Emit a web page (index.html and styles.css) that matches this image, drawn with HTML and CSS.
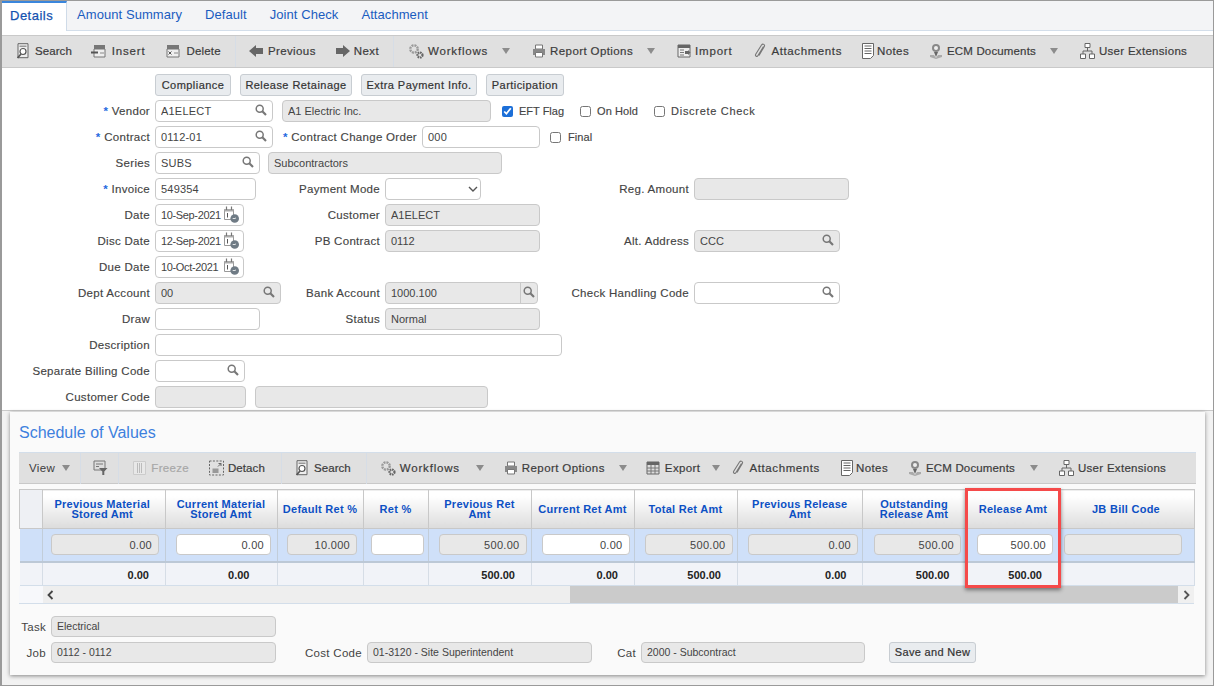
FILE: index.html
```html
<!DOCTYPE html>
<html lang="en">
<head>
<meta charset="utf-8">
<title>Details</title>
<link rel="stylesheet" href="styles.css">
</head>
<body>
<svg class="defs" width="0" height="0" aria-hidden="true">
  <defs>
    <symbol id="i-search" viewBox="0 0 14 16"><path d="M2 .7h10v14H2z" fill="#eee" stroke="#666"/><path d="M3.500 2.500h7v1.500h-7z" fill="#999"/><circle cx="7" cy="8.500" r="3" fill="#fff" stroke="#555" stroke-width="1.200"/><path d="M5 11 1.500 15" stroke="#555" stroke-width="1.600"/></symbol>
    <symbol id="i-insert" viewBox="0 0 16 16"><path d="M3 2h11v4H3z" fill="#777"/><path d="M3 6h11v8H3z" fill="#eee" stroke="#777"/><path d="M0 9.500h7" stroke="#555" stroke-width="2"/><path d="M9 10h4" stroke="#888"/></symbol>
    <symbol id="i-delete" viewBox="0 0 16 16"><path d="M2 2h12v4H2z" fill="#777"/><path d="M2 6h12v8H2z" fill="#eee" stroke="#777"/><path d="M3.500 8.500l3 3m0-3-3 3" stroke="#555"/><path d="M9 10h4" stroke="#888"/></symbol>
    <symbol id="i-left" viewBox="0 0 14 14"><path d="M0 7 7 1v3h7v6H7v3z" fill="#666"/></symbol>
    <symbol id="i-right" viewBox="0 0 14 14"><path d="M14 7 7 1v3H0v6h7v3z" fill="#666"/></symbol>
    <symbol id="i-gears" viewBox="0 0 16 16"><circle cx="6" cy="6" r="3.700" fill="none" stroke="#999" stroke-width="2.400" stroke-dasharray="2 .9"/><circle cx="12" cy="12" r="2.500" fill="none" stroke="#666" stroke-width="2.200" stroke-dasharray="1.600 .7"/></symbol>
    <symbol id="i-print" viewBox="0 0 14 14"><path d="M3.500 1h7v4h-7z" fill="#fff" stroke="#777"/><path d="M1 5h12v6H1z" fill="#888"/><path d="M3.500 8.500h7v4.500h-7z" fill="#fff" stroke="#777"/></symbol>
    <symbol id="i-import" viewBox="0 0 14 14"><path d="M1 1h12v12H1z" fill="#eee" stroke="#666"/><path d="M1 1h12v3H1z" fill="#666"/><path d="M3 6h4M3 8.500h4M3 11h4" stroke="#777"/><path d="M8 7h3v-1l2.500 2.500L11 11v-1H8z" fill="#666"/></symbol>
    <symbol id="i-clip" viewBox="0 0 12 16"><path d="M9.500 3.500 4 12.500c-1 1.700-3.200.6-2.300-1.200L7.500 2c1.300-1.800 3.800-.4 2.800 1.500L5 12.500" fill="none" stroke="#777" stroke-width="1.100"/></symbol>
    <symbol id="i-notes" viewBox="0 0 12 16"><path d="M.5.500h11v12l-3 3h-8z" fill="#fff" stroke="#666"/><path d="M2.500 3h7M2.500 5.500h7M2.500 8h7M2.500 10.500h7" stroke="#666"/></symbol>
    <symbol id="i-ecm" viewBox="0 0 14 16"><circle cx="7" cy="5" r="4" fill="#888"/><circle cx="7" cy="5" r="2" fill="#eee"/><path d="M5 9h4l-2 5z" fill="#666"/><path d="M1 12h4l2 3 2-3h4v2l-6 2-6-2z" fill="#aaa"/></symbol>
    <symbol id="i-tree" viewBox="0 0 15 16"><path d="M5 .5h5v4H5zM.5 11h5v4.500h-5zM9.500 11h5v4.500h-5z" fill="#fff" stroke="#666"/><path d="M7.500 4.500V8M3 11V8h9v3" fill="none" stroke="#666"/></symbol>
    <symbol id="i-filter" viewBox="0 0 15 16"><path d="M1 1h11v9H1z" fill="#ddd" stroke="#777"/><path d="M3 4h7M3 6.500h3" stroke="#777"/><path d="M6 8h8.500l-3.200 3.500V15h-2v-3.500z" fill="#666"/></symbol>
    <symbol id="i-freeze" viewBox="0 0 13 14"><path d="M.5.500h12v13H.5z" fill="#e8e8e8" stroke="#ccc"/><path d="M4.500 2v10M6.500 2v10M8.500 2v10" stroke="#bbb"/></symbol>
    <symbol id="i-detach" viewBox="0 0 15 15"><path d="M.5.500h14v14H.5z" fill="none" stroke="#666" stroke-dasharray="2 1.400"/><path d="M3.500 8h6v4.500h-6z" fill="#999"/><path d="M9 6l3-3m-2.500 0H12v2.500" fill="none" stroke="#666"/></symbol>
    <symbol id="i-export" viewBox="0 0 14 14"><path d="M1 1h12v12H1z" fill="#ddd" stroke="#666"/><path d="M1 1h12v3H1z" fill="#666"/><path d="M5 4v9M9 4v9M1 7h12M1 10h12" stroke="#777"/></symbol>
    <symbol id="i-mag" viewBox="0 0 12 12"><circle cx="4.700" cy="4.700" r="3.500" fill="none" stroke="#777" stroke-width="1.500"/><path d="M7.300 7.300l3.700 3.700" stroke="#777" stroke-width="2.200"/></symbol>
    <symbol id="i-cal" viewBox="0 0 15 17"><path d="M.5 3.500h9v10h-9z" fill="#fff" stroke="#999"/><path d="M.5 3h9v2.500h-9z" fill="#aaa"/><path d="M2.500.500v3.500M7.500.500v3.500" stroke="#777" stroke-width="1.200"/><path d="M3.500 7v4.500" stroke="#555"/><circle cx="10.700" cy="12.500" r="4.300" fill="#6f7b85"/><path d="M8.700 12.500h2.300l1-.7" fill="none" stroke="#fff" stroke-width=".8"/></symbol>
    <symbol id="i-chev" viewBox="0 0 10 6"><path d="M1 1l4 4 4-4" fill="none" stroke="#555" stroke-width="1.400"/></symbol>
    <symbol id="i-sl" viewBox="0 0 7 10"><path d="M5.500 1 1.500 5l4 4" fill="none" stroke="#444" stroke-width="1.800"/></symbol>
    <symbol id="i-sr" viewBox="0 0 7 10"><path d="M1.500 1l4 4-4 4" fill="none" stroke="#555" stroke-width="1.800"/></symbol>
  </defs>
</svg>

<main class="window">
  <nav class="tabs">
    <a class="tab active">Details</a>
    <a class="tab">Amount Summary</a>
    <a class="tab">Default</a>
    <a class="tab">Joint Check</a>
    <a class="tab">Attachment</a>
  </nav>

  <div class="toolbar top">
    <span class="tool g5 narrow"><svg class="ic w14"><use href="#i-search"/></svg>Search</span>
    <span class="tool g5 t-insert"><svg class="ic w16"><use href="#i-insert"/></svg>Insert</span>
    <span class="tool g5 t-delete"><svg class="ic w16"><use href="#i-delete"/></svg>Delete</span>
    <span class="vsep"></span>
    <span class="tool g5 t-prev"><svg class="ic w14"><use href="#i-left"/></svg>Previous</span>
    <span class="tool t-next"><svg class="ic w14"><use href="#i-right"/></svg>Next</span>
    <span class="vsep"></span>
    <span class="tool t-wf"><svg class="ic w16"><use href="#i-gears"/></svg>Workflows<i class="caret"></i></span>
    <span class="tool t-rep"><svg class="ic w14"><use href="#i-print"/></svg>Report Options<i class="caret"></i></span>
    <span class="tool t-imp"><svg class="ic w14"><use href="#i-import"/></svg>Import</span>
    <span class="tool g5 t-att"><svg class="ic w12"><use href="#i-clip"/></svg>Attachments</span>
    <span class="tool t-not"><svg class="ic w12"><use href="#i-notes"/></svg>Notes</span>
    <span class="tool t-ecm"><svg class="ic w14"><use href="#i-ecm"/></svg>ECM Documents<i class="caret"></i></span>
    <span class="tool t-usr"><svg class="ic w15"><use href="#i-tree"/></svg>User Extensions</span>
  </div>

  <form class="form">
    <div class="btnrow">
      <button type="button" class="btn b1">Compliance</button>
      <button type="button" class="btn b2">Release Retainage</button>
      <button type="button" class="btn b3">Extra Payment Info.</button>
      <button type="button" class="btn b4">Participation</button>
    </div>

    <div class="row">
      <label class="lbl"><b>*</b> Vendor</label>
      <div class="span">
        <span class="fld w118"><input value="A1ELECT"><svg class="mag"><use href="#i-mag"/></svg></span>
        <input class="ro w209 ml9" value="A1 Electric Inc." readonly>
        <label class="chk ml11 ls0"><input type="checkbox" checked>EFT Flag</label>
        <label class="chk ml16 ls1"><input type="checkbox">On Hold</label>
        <label class="chk ml16 ls7"><input type="checkbox">Discrete Check</label>
      </div>
    </div>

    <div class="row">
      <label class="lbl"><b>*</b> Contract</label>
      <div class="span">
        <span class="fld w118"><input value="0112-01"><svg class="mag"><use href="#i-mag"/></svg></span>
        <label class="lbl2 w149"><b>*</b> Contract Change Order</label>
        <input class="w118" value="000">
        <label class="chk ml10 gap7 ls1"><input type="checkbox">Final</label>
      </div>
    </div>

    <div class="row">
      <label class="lbl">Series</label>
      <div class="span">
        <span class="fld w105"><input value="SUBS"><svg class="mag"><use href="#i-mag"/></svg></span>
        <input class="ro w234 ml8" value="Subcontractors" readonly>
      </div>
    </div>

    <div class="row">
      <label class="lbl"><b>*</b> Invoice</label>
      <div class="c2"><input class="w101" value="549354"><label class="lbl2">Payment Mode</label></div>
      <div class="c3"><span class="fld w96"><select class="sel"><option></option></select><svg class="chev"><use href="#i-chev"/></svg></span><label class="lbl2">Reg. Amount</label></div>
      <input class="ro w155" readonly>
    </div>

    <div class="row">
      <label class="lbl">Date</label>
      <div class="c2"><span class="fld w89"><input class="date" value="10-Sep-2021"><svg class="cal"><use href="#i-cal"/></svg></span><label class="lbl2">Customer</label></div>
      <div class="c3"><input class="ro w155" value="A1ELECT" readonly></div>
    </div>

    <div class="row">
      <label class="lbl">Disc Date</label>
      <div class="c2"><span class="fld w89"><input class="date" value="12-Sep-2021"><svg class="cal"><use href="#i-cal"/></svg></span><label class="lbl2">PB Contract</label></div>
      <div class="c3"><input class="ro w155" value="0112" readonly><label class="lbl2">Alt. Address</label></div>
      <span class="fld w146"><input class="ro" value="CCC" readonly><svg class="mag"><use href="#i-mag"/></svg></span>
    </div>

    <div class="row">
      <label class="lbl">Due Date</label>
      <div class="c2"><span class="fld w89"><input class="date" value="10-Oct-2021"><svg class="cal"><use href="#i-cal"/></svg></span></div>
    </div>

    <div class="row">
      <label class="lbl">Dept Account</label>
      <div class="c2"><span class="fld w126"><input class="ro" value="00" readonly><svg class="mag"><use href="#i-mag"/></svg></span><label class="lbl2">Bank Account</label></div>
      <div class="c3"><span class="fld w153"><input class="ro" value="1000.100" readonly><span class="magbox"><svg class="mag"><use href="#i-mag"/></svg></span></span><label class="lbl2">Check Handling Code</label></div>
      <span class="fld w146"><input><svg class="mag"><use href="#i-mag"/></svg></span>
    </div>

    <div class="row">
      <label class="lbl">Draw</label>
      <div class="c2"><input class="w105"><label class="lbl2">Status</label></div>
      <div class="c3"><input class="ro w155" value="Normal" readonly></div>
    </div>

    <div class="row">
      <label class="lbl">Description</label>
      <div class="span"><input class="w407"></div>
    </div>

    <div class="row">
      <label class="lbl">Separate Billing Code</label>
      <div class="span"><span class="fld w90"><input><svg class="mag"><use href="#i-mag"/></svg></span></div>
    </div>

    <div class="row">
      <label class="lbl">Customer Code</label>
      <div class="span"><input class="ro w91" readonly><input class="ro w233 ml9" readonly></div>
    </div>
  </form>

  <div class="lower">
  <section class="panel">
    <h2 class="title">Schedule of Values</h2>
    <div class="toolbar sub">
      <span class="tool view">View<i class="caret c-view"></i></span>
      <span class="vsep sv"></span>
      <svg class="ic w15 s-filter"><use href="#i-filter"/></svg>
      <span class="vsep sf"></span>
      <span class="tool g5 dis s-freeze"><svg class="ic w13"><use href="#i-freeze"/></svg>Freeze</span>
      <span class="tool s-detach"><svg class="ic w15"><use href="#i-detach"/></svg>Detach</span>
      <span class="vsep sd"></span>
      <span class="tool g5 narrow s-search"><svg class="ic w14"><use href="#i-search"/></svg>Search</span>
      <span class="vsep ss"></span>
      <span class="tool s-wf"><svg class="ic w16"><use href="#i-gears"/></svg>Workflows<i class="caret c-wf"></i></span>
      <span class="tool s-rep"><svg class="ic w14"><use href="#i-print"/></svg>Report Options<i class="caret"></i></span>
      <span class="tool g5 s-exp"><svg class="ic w14"><use href="#i-export"/></svg>Export<i class="caret c-exp"></i></span>
      <span class="tool g5 s-att"><svg class="ic w12"><use href="#i-clip"/></svg>Attachments</span>
      <span class="tool s-not"><svg class="ic w12"><use href="#i-notes"/></svg>Notes</span>
      <span class="tool s-ecm"><svg class="ic w14"><use href="#i-ecm"/></svg>ECM Documents<i class="caret c-ecm"></i></span>
      <span class="tool s-usr"><svg class="ic w15"><use href="#i-tree"/></svg>User Extensions</span>
    </div>

    <div class="gridwrap">
      <table class="grid">
        <colgroup>
          <col class="k0"><col class="k1"><col class="k2"><col class="k3"><col class="k4"><col class="k5"><col class="k6"><col class="k7"><col class="k8"><col class="k9"><col class="k10"><col class="k11">
        </colgroup>
        <thead>
          <tr>
            <th></th>
            <th>Previous Material<br>Stored Amt</th>
            <th>Current Material<br>Stored Amt</th>
            <th>Default Ret %</th>
            <th>Ret %</th>
            <th>Previous Ret<br>Amt</th>
            <th>Current Ret Amt</th>
            <th>Total Ret Amt</th>
            <th>Previous Release<br>Amt</th>
            <th>Outstanding<br>Release Amt</th>
            <th>Release Amt</th>
            <th class="jb">JB Bill Code</th>
          </tr>
        </thead>
        <tbody>
          <tr class="data">
            <td></td>
            <td><input class="ro num" value="0.00" readonly></td>
            <td><input class="num" value="0.00"></td>
            <td><input class="ro num" value="10.000" readonly></td>
            <td><input class="num"></td>
            <td><input class="ro num" value="500.00" readonly></td>
            <td><input class="num" value="0.00"></td>
            <td><input class="ro num" value="500.00" readonly></td>
            <td><input class="ro num" value="0.00" readonly></td>
            <td><input class="ro num" value="500.00" readonly></td>
            <td><input class="num" value="500.00"></td>
            <td><input class="ro num" readonly></td>
          </tr>
          <tr class="totals">
            <td></td><td>0.00</td><td>0.00</td><td></td><td></td><td>500.00</td><td>0.00</td><td>500.00</td><td>0.00</td><td>500.00</td><td>500.00</td><td></td>
          </tr>
        </tbody>
      </table>
      <div class="scrollbar">
        <span class="sc-corner"></span>
        <span class="sc-btn"><svg class="sc-ic"><use href="#i-sl"/></svg></span>
        <span class="sc-track"><span class="sc-thumb"></span></span>
        <span class="sc-btn right"><svg class="sc-ic"><use href="#i-sr"/></svg></span>
      </div>
      <div class="redbox"></div>
    </div>

    <div class="foot">
      <div class="frow"><label class="flbl">Task</label><input class="ro w225" value="Electrical" readonly></div>
      <div class="frow">
        <label class="flbl">Job</label><input class="ro w225" value="0112 - 0112" readonly>
        <label class="flbl l-cost">Cost Code</label><input class="ro w225" value="01-3120 - Site Superintendent" readonly>
        <label class="flbl l-cat">Cat</label><input class="ro w224" value="2000 - Subcontract" readonly>
        <button type="button" class="btn save">Save and New</button>
      </div>
    </div>
  </section>
  </div>
</main>
</body>
</html>
```

FILE: styles.css
```css
* { box-sizing: border-box; }
html, body { margin: 0; padding: 0; }
body { width: 1214px; height: 686px; overflow: hidden; background: #fff; font-family: "Liberation Sans", Arial, sans-serif; font-size: 11px; color: #444; }
.defs { position: absolute; }
.window { width: 1214px; height: 686px; border: 1px solid #9a9a9a; border-left-width: 2px; display: flex; flex-direction: column; background: #fff; }

.tabs { display: flex; height: 30px; flex: none; background: #f3f4f6; border-bottom: 1px solid #d3deea; }
.tab { padding: 0 10px; margin-left: 3px; line-height: 28px; font-size: 13px; letter-spacing: .07px; color: #1a5cc0; }
.tab.active { width: 65px; height: 30px; margin: 0; padding: 0 0 0 8px; line-height: 26px; letter-spacing: .5px; background: #fff; border-top: 2px solid #3a86dc; border-right: 1px solid #cfdbe8; color: #1452b0; -webkit-text-stroke: .25px #1452b0; }
.tab.active + .tab { margin-left: 0; }

.toolbar { display: flex; align-items: center; background: #e0e0e0; flex: none; }
.toolbar.top { margin-top: 4px; height: 33px; border-top: 1px solid #c9c9c9; border-bottom: 1px solid #c9c9c9; padding: 0 0 1px 14px; }
.tool { display: inline-flex; align-items: center; gap: 4px; font-size: 11.500px; letter-spacing: .4px; color: #3c3c3c; white-space: nowrap; -webkit-text-stroke: .2px #3c3c3c; }
.g5 { gap: 5px; }
.narrow { letter-spacing: .07px; }
.tool.dis { color: #a8a8a8; -webkit-text-stroke: .2px #a8a8a8; }
.ic { flex: none; height: 16px; }
.w12 { width: 12px; } .w13 { width: 13px; } .w14 { width: 14px; } .w15 { width: 15px; } .w16 { width: 16px; }
.vsep { width: 1px; height: 31px; background: #d6dde6; flex: none; }
.caret { width: 0; height: 0; margin-left: 10px; border-left: 4px solid transparent; border-right: 4px solid transparent; border-top: 6px solid #8c8c8c; }

.t-insert { margin-left: 19px; letter-spacing: .8px; }
.t-delete { margin-left: 20px; letter-spacing: .2px; }
.top .vsep { margin-left: 14px; }
.t-prev { margin-left: 13px; }
.t-next { margin-left: 20px; }
.t-wf { margin-left: 14px; letter-spacing: .8px; }
.t-rep { margin-left: 22px; }
.t-imp { margin-left: 22px; letter-spacing: .8px; }
.t-att { margin-left: 22px; letter-spacing: .6px; }
.t-not { margin-left: 20px; gap: 3px; }
.t-ecm { margin-left: 20px; letter-spacing: .15px; }
.t-usr { margin-left: 22px; letter-spacing: .3px; }

.form { padding: 6px 0 0; height: 342px; flex: none; }
.btnrow { display: flex; gap: 9px; padding-left: 153px; height: 22px; margin-bottom: 4px; }
.btn { height: 22px; padding: 0; border: 1px solid #c8cdd2; border-radius: 3px; background: #e9ecef; font: 400 11px "Liberation Sans", Arial, sans-serif; letter-spacing: .45px; color: #333; -webkit-text-stroke: .2px #333; }
.b1 { width: 76px; } .b2 { width: 112px; } .b3 { width: 116px; } .b4 { width: 78px; }
.row { display: grid; grid-template-columns: 153px 230px 309px 1fr; height: 22px; margin-bottom: 4px; align-items: center; }
.lbl, .lbl2 { padding-right: 5px; text-align: right; white-space: nowrap; font-size: 11.500px; letter-spacing: .3px; -webkit-text-stroke: .15px #444; }
.lbl b, .lbl2 b { color: #1f6ae0; font-weight: 700; -webkit-text-stroke: 0; }
.c2, .c3 { display: flex; justify-content: space-between; align-items: center; height: 22px; }
.span { grid-column: 2 / 5; display: flex; align-items: center; height: 22px; }

input { height: 22px; width: 100%; padding: 0 5px; border: 1px solid #c9c9c9; border-radius: 4px; background: #fff; font: 11px "Liberation Sans", Arial, sans-serif; letter-spacing: .2px; color: #444; outline: none; margin: 0; }
input.ro { background: #e8e8e8; letter-spacing: 0; }
.fld { position: relative; display: block; height: 22px; flex: none; }
.mag { position: absolute; right: 6px; top: 4px; width: 12px; height: 12px; }
.cal { position: absolute; right: 5px; top: 2px; width: 15px; height: 17px; }
input.date { padding-right: 0; letter-spacing: -.35px; }
.magbox { position: absolute; right: 0; top: 0; width: 18px; height: 22px; border-left: 1px solid #c9c9c9; }
.magbox .mag { right: 3px; }
.sel { display: block; width: 96px; height: 22px; appearance: none; -webkit-appearance: none; border: 1px solid #c9c9c9; border-radius: 4px; background: #fff; font: 11px "Liberation Sans", Arial, sans-serif; }
.chev { position: absolute; right: 3px; top: 8px; width: 10px; height: 6px; }
.w89 { width: 89px; } .w90 { width: 90px; } .w91 { width: 91px; flex: none; } .w96 { width: 96px; } .w101 { width: 101px; } .w105 { width: 105px; flex: none; } .w118 { width: 118px; flex: none; }
.w126 { width: 126px; } .w146 { width: 146px; } .w153 { width: 153px; } .w155 { width: 155px; flex: none; } .w209 { width: 209px; flex: none; } .w224 { width: 224px; flex: none; } .w225 { width: 225px; flex: none; } .w233 { width: 233px; flex: none; } .w234 { width: 234px; flex: none; } .w407 { width: 407px; }
.lbl2.w149 { width: 149px; flex: none; }
.ml8 { margin-left: 8px; } .ml9 { margin-left: 9px; } .ml10 { margin-left: 10px; } .ml11 { margin-left: 11px; } .ml16 { margin-left: 16px; }
.chk { display: inline-flex; align-items: center; gap: 6px; white-space: nowrap; letter-spacing: .36px; -webkit-text-stroke: .15px #444; }
.gap7 { gap: 7px; }
.ls0 { letter-spacing: 0; } .ls1 { letter-spacing: .1px; } .ls7 { letter-spacing: .7px; }
.chk input { width: 11px; height: 11px; margin: 1px 0 0; flex: none; accent-color: #1c6fd8; }

.lower { flex: 1; background: #f2f2f2; border-top: 1px solid #c9c9c9; padding: 1px 8px 0; }
.panel { height: 263px; background: #fafafa; padding: 0 9px; box-shadow: 0 1px 4px rgba(0,0,0,.45); }
.title { margin: 0; height: 40px; padding-top: 11px; font-size: 16px; line-height: 20px; font-weight: 400; color: #3d80de; }
.toolbar.sub { height: 32px; border-top: 1px solid #d3deea; border-bottom: 1px solid #c9c9c9; padding-left: 10px; }
.view { -webkit-text-stroke: 0; gap: 0; }
.c-view { margin-left: 7px; }
.sv { margin-left: 10px; }
.s-filter { margin-left: 12px; }
.sf { margin-left: 10px; }
.s-freeze { margin-left: 14px; letter-spacing: .3px; }
.s-detach { margin-left: 20px; letter-spacing: .1px; }
.sd { margin-left: 16px; }
.s-search { margin-left: 13px; }
.ss { margin-left: 15px; }
.s-wf { margin-left: 13px; letter-spacing: .8px; }
.c-wf { margin-left: 12px; }
.s-rep { margin-left: 20px; }
.s-exp { margin-left: 19px; }
.c-exp { margin-left: 7px; }
.s-att { margin-left: 12px; letter-spacing: .6px; }
.s-not { margin-left: 21px; gap: 3px; }
.s-ecm { margin-left: 20px; letter-spacing: .15px; }
.c-ecm { margin-left: 11px; }
.s-usr { margin-left: 21px; letter-spacing: .3px; }

.gridwrap { position: relative; margin-top: 5px; width: 1175px; }
.grid { table-layout: fixed; width: 1175px; border-collapse: collapse; }
.k0 { width: 23px; } .k1 { width: 122.500px; } .k2 { width: 112px; } .k3 { width: 86px; } .k4 { width: 65px; } .k5 { width: 103px; } .k6 { width: 103px; } .k7 { width: 103px; } .k8 { width: 125.500px; } .k9 { width: 103px; } .k10 { width: 95px; } .k11 { width: 134px; }
.grid th { height: 39px; padding: 0; border: 1px solid #c8c8c8; background: linear-gradient(#fff 15%, #dcdcdc); color: #0c50c4; font-size: 11px; font-weight: 700; line-height: 10px; letter-spacing: .27px; }
.grid th:first-child { background: #eef0f4; }
.grid th:nth-child(2) { padding-right: 3px; }
.grid th.jb { padding-right: 3px; }
.data td { height: 33px; padding: 0 4px 0 10.500px; background: #cfe0f9; border-right: 1px solid #c2cdd9; border-bottom: 2px solid #bcc8d6; }
.data td:nth-child(2) { padding: 0 5.500px 0 8px; }
.data td:nth-child(3) { padding: 0 5.500px 0 10.500px; }
.data td:nth-child(4) { padding: 0 5.500px 0 9.500px; }
.data td:nth-child(5) { padding: 0 4px 0 7.500px; }
.data td:nth-child(11) { padding: 0 7px 0 11px; }
.data td:last-child { padding: 0 12px 0 3px; }
.data input { height: 21px; }
input.num, input.ro.num { text-align: right; padding-right: 6px; letter-spacing: .3px; }
.totals td { height: 24px; padding: 2px 15.500px 0 0; text-align: right; background: #f1f3f8; border-right: 1px solid #d6dde6; border-bottom: 1px solid #d3deea; font-weight: 700; color: #222; }
.totals td:nth-child(3) { padding-right: 27px; }
.totals td:nth-child(11) { padding-right: 18px; }
.scrollbar { display: flex; height: 18px; border-bottom: 1px solid #d3deea; background: #eee; }
.sc-corner { width: 24px; background: #f7f8fb; }
.sc-btn { width: 16px; flex: none; display: flex; align-items: center; justify-content: center; }
.sc-btn:nth-child(2) { justify-content: flex-start; padding-left: 4px; }
.sc-ic { width: 7px; height: 10px; }
.sc-btn.right { background: #f0f0f0; }
.sc-track { flex: 1; padding-left: 511px; }
.sc-thumb { display: block; height: 17px; background: #cbcbcb; }
.redbox { position: absolute; left: 946px; top: -1px; width: 96px; height: 100px; border: 3px solid #f54a4a; box-shadow: 0 2px 4px rgba(0,0,0,.45); }

.foot { padding-top: 12px; }
.frow { display: flex; align-items: center; height: 20px; margin-bottom: 6px; }
.frow input { height: 21px; font-size: 10.500px; }
.flbl { width: 32px; padding: 1px 5px 0 0; text-align: right; white-space: nowrap; flex: none; font-size: 11.500px; letter-spacing: .3px; }
.l-cost { width: 91px; }
.l-cat { width: 49px; }
.btn.save { margin-left: 24px; width: 87px; height: 21px; letter-spacing: .32px; }
```
